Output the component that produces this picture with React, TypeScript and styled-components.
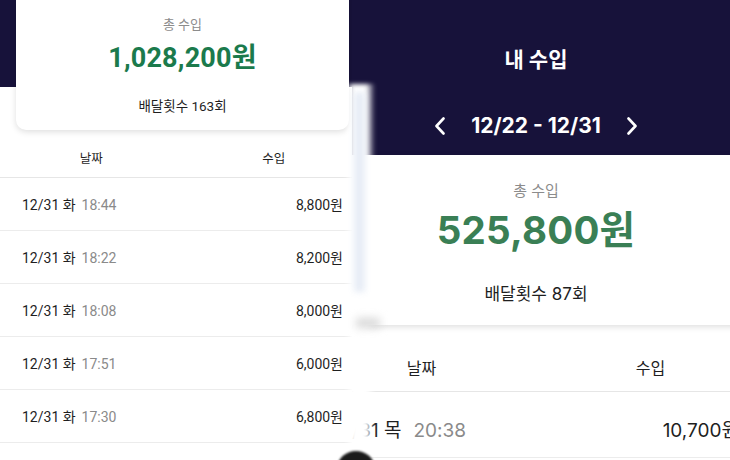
import React from 'react';
import styled, { createGlobalStyle } from 'styled-components';

const NAVY = '#17123a';

const Global = createGlobalStyle`
  html, body { margin: 0; padding: 0; background: #fff; }
  body { width: 730px; height: 460px; overflow: hidden; }
`;

const Stage = styled.div`
  position: relative;
  display: flex;
  width: 730px;
  height: 460px;
  overflow: hidden;
  background: #fff;
`;

const LeftPane = styled.section`
  flex: 0 0 352px;
  overflow: hidden;
`;

const RightPane = styled.section`
  flex: 1;
  overflow: hidden;
`;

/* ---------- Left (Android-like) screen ---------- */
const AndroidScreen = styled.div`
  display: flex;
  flex-direction: column;
  width: 365px;
  font-family: Roboto, "Noto Sans CJK KR", sans-serif;
  background: linear-gradient(to bottom, ${NAVY} 0 87px, #fff 87px);
`;

const SummaryCard = styled.div<{ $h: number; $pt: number; $radius: number; $mx: number; $mt: number }>`
  display: flex;
  flex-direction: column;
  align-items: center;
  box-sizing: border-box;
  height: ${p => p.$h}px;
  margin: ${p => p.$mt}px ${p => p.$mx}px 0;
  padding-top: ${p => p.$pt}px;
  background: #fff;
  border-radius: ${p => p.$radius}px;
  box-shadow: 0 2px 6px rgba(0, 0, 0, 0.13);
  position: relative;
  z-index: 1;
`;

const Label = styled.div<{ $fs: number; $lh: number }>`
  font-size: ${p => p.$fs}px;
  line-height: ${p => p.$lh}px;
  color: #8c8c8c;
`;

const Total = styled.div<{ $fs: number; $lh: number; $mt: number; $color: string }>`
  font-size: ${p => p.$fs}px;
  line-height: ${p => p.$lh}px;
  margin-top: ${p => p.$mt}px;
  font-weight: 700;
  color: ${p => p.$color};
  letter-spacing: 0.2px;
`;

const Count = styled.div<{ $fs: number; $lh: number; $mt: number }>`
  font-size: ${p => p.$fs}px;
  line-height: ${p => p.$lh}px;
  margin-top: ${p => p.$mt}px;
  color: #1f1f1f;
`;

const TableHead = styled.div<{ $h: number; $pt: number; $fs: number }>`
  display: grid;
  grid-template-columns: 1fr 1fr;
  align-items: center;
  box-sizing: border-box;
  height: ${p => p.$h}px;
  padding-top: ${p => p.$pt}px;
  font-size: ${p => p.$fs}px;
  color: #1f1f1f;
  text-align: center;
  border-bottom: 1px solid #e6e6e6;
`;

const Row = styled.div<{ $h: number; $px: number; $pt: number; $fs: number }>`
  display: flex;
  align-items: center;
  justify-content: space-between;
  box-sizing: border-box;
  height: ${p => p.$h}px;
  padding: ${p => p.$pt}px ${p => p.$px}px 0;
  font-size: ${p => p.$fs}px;
  color: #1f1f1f;
  border-bottom: 1px solid #ececec;
`;

const DateText = styled.span``;

const TimeText = styled.span<{ $ml: number }>`
  margin-left: ${p => p.$ml}px;
  color: #8a8a8a;
`;

/* ---------- Right (iOS-like) screen ---------- */
const IosScreen = styled.div`
  display: flex;
  flex-direction: column;
  width: 458px;
  margin-left: -45px;
  font-family: Inter, "Noto Sans CJK KR", sans-serif;
`;

const IosHeader = styled.header`
  display: flex;
  flex-direction: column;
  align-items: center;
  box-sizing: border-box;
  height: 155px;
  padding-top: 46px;
  background: ${NAVY};
  color: #fff;
`;

const Title = styled.h1`
  margin: 0;
  font-size: 21px;
  line-height: 28px;
  font-weight: 700;
`;

const RangeNav = styled.div`
  display: flex;
  align-items: center;
  gap: 26px;
  margin-top: 38px;
  font-size: 21px;
  line-height: 28px;
  font-weight: 700;
`;

const Chevron = ({ dir }: { dir: 'left' | 'right' }) => (
  <svg width="10" height="18" viewBox="0 0 10 18" fill="none">
    <polyline
      points={dir === 'left' ? '8.5,1.5 1.5,9 8.5,16.5' : '1.5,1.5 8.5,9 1.5,16.5'}
      stroke="#fff"
      strokeWidth="2.6"
      strokeLinecap="round"
      strokeLinejoin="round"
    />
  </svg>
);

/* ---------- Collage seam overlays ---------- */
const WhiteSeam = styled.div`
  position: absolute;
  left: 345px;
  top: 84px;
  width: 30px;
  height: 376px;
  background: linear-gradient(to right, rgba(255,255,255,0) 0, #fff 25%, #fff 70%, rgba(255,255,255,0) 100%);
  filter: blur(2px);
  z-index: 5;
`;

const BlueSeam = styled.div`
  position: absolute;
  left: 354px;
  top: 92px;
  width: 11px;
  height: 200px;
  background: #e7edf6;
  filter: blur(3px);
  z-index: 6;
`;

const GraySmudge = styled.div`
  position: absolute;
  left: 356px;
  top: 318px;
  width: 24px;
  height: 10px;
  background: #d9d9d9;
  filter: blur(4px);
  z-index: 6;
`;

const DarkBlob = styled.div`
  position: absolute;
  left: 338px;
  top: 451px;
  width: 36px;
  height: 30px;
  border-radius: 50%;
  background: #1a1a1a;
  filter: blur(1px);
  z-index: 7;
`;

const leftRows = [
  { time: '18:44', amount: '8,800원' },
  { time: '18:22', amount: '8,200원' },
  { time: '18:08', amount: '8,000원' },
  { time: '17:51', amount: '6,000원' },
  { time: '17:30', amount: '6,800원' },
];

export default function App() {
  return (
    <Stage>
      <Global />
      <LeftPane>
        <AndroidScreen>
          <SummaryCard $h={140} $pt={26} $radius={10} $mx={16} $mt={-10}>
            <Label $fs={13} $lh={18}>총 수입</Label>
            <Total $fs={27} $lh={32} $mt={8} $color="#1b7a4c">1,028,200원</Total>
            <Count $fs={13.5} $lh={18} $mt={23}>배달횟수 163회</Count>
          </SummaryCard>
          <TableHead $h={48} $pt={8} $fs={12.5}>
            <span>날짜</span>
            <span>수입</span>
          </TableHead>
          {leftRows.map(r => (
            <Row key={r.time} $h={53} $px={22} $pt={0} $fs={14}>
              <span>
                <DateText>12/31 화</DateText>
                <TimeText $ml={6}>{r.time}</TimeText>
              </span>
              <span>{r.amount}</span>
            </Row>
          ))}
        </AndroidScreen>
      </LeftPane>
      <RightPane>
        <IosScreen>
          <IosHeader>
            <Title>내 수입</Title>
            <RangeNav>
              <Chevron dir="left" />
              <span>12/22 - 12/31</span>
              <Chevron dir="right" />
            </RangeNav>
          </IosHeader>
          <SummaryCard $h={170} $pt={26} $radius={0} $mx={20} $mt={0}>
            <Label $fs={15} $lh={20}>총 수입</Label>
            <Total $fs={38.5} $lh={46} $mt={6} $color="#3a7f55">525,800원</Total>
            <Count $fs={17} $lh={24} $mt={29}>배달횟수 87회</Count>
          </SummaryCard>
          <TableHead $h={67} $pt={18} $fs={16}>
            <span>날짜</span>
            <span>수입</span>
          </TableHead>
          <Row $h={66} $px={26} $pt={8} $fs={19}>
            <span>
              <DateText>12/31 목</DateText>
              <TimeText $ml={12}>20:38</TimeText>
            </span>
            <span>10,700원</span>
          </Row>
        </IosScreen>
      </RightPane>
      <WhiteSeam />
      <BlueSeam />
      <GraySmudge />
      <DarkBlob />
    </Stage>
  );
}
